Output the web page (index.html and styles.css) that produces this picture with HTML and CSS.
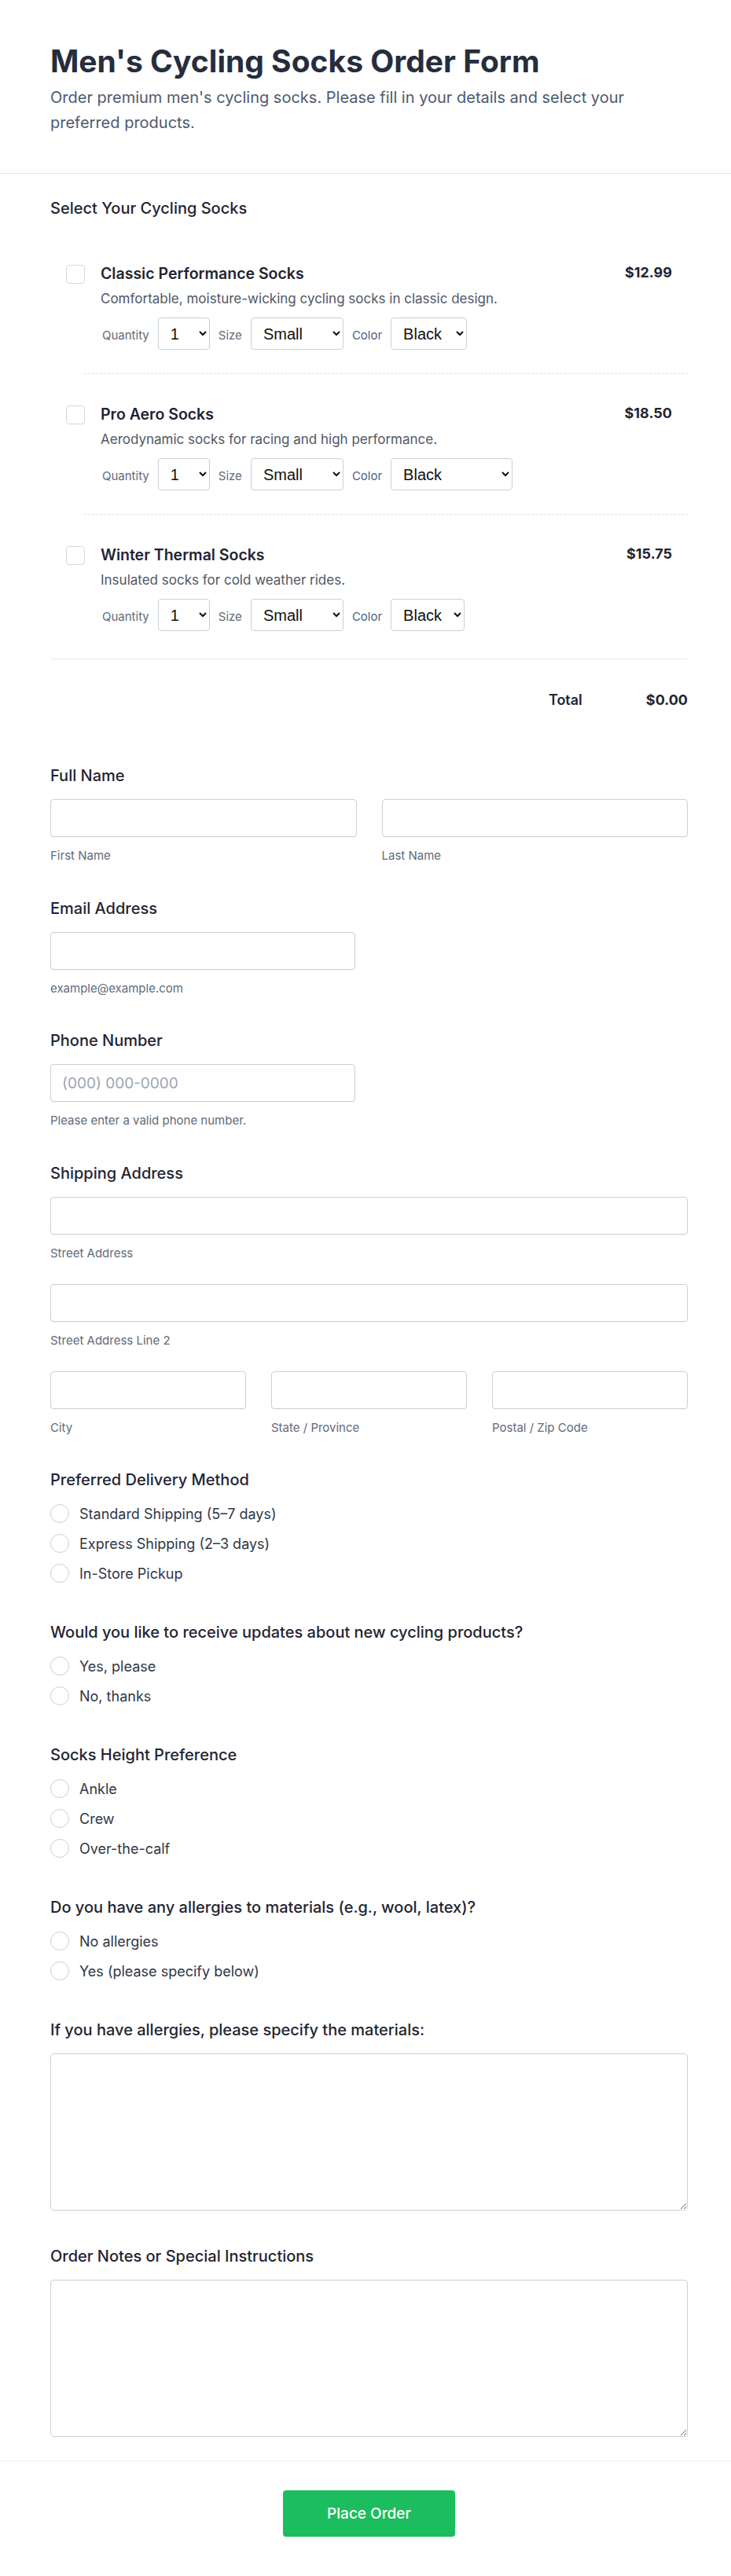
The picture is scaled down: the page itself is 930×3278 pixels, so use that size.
FILE: index.html
```html
<!DOCTYPE html>
<html lang="en">
<head>
<meta charset="utf-8">
<title>Men's Cycling Socks Order Form</title>
<link rel="stylesheet" href="styles.css">
</head>
<body>
<header class="header">
  <h1 class="title">Men's Cycling Socks Order Form</h1>
  <p class="subtitle">Order premium men's cycling socks. Please fill in your details and select your preferred products.</p>
</header>

<form class="form">
  <div class="section-label">Select Your Cycling Socks</div>

  <div class="products">
    <div class="product">
      <input type="checkbox" class="check">
      <div class="info">
        <div class="pname">Classic Performance Socks</div>
        <div class="pdesc">Comfortable, moisture-wicking cycling socks in classic design.</div>
        <div class="opts">
          <span class="opt-label">Quantity</span>
          <select class="sel sel-qty"><option>1</option><option>2</option><option>3</option></select>
          <span class="opt-label">Size</span>
          <select class="sel sel-size"><option>Small</option><option>Medium</option><option>Large</option></select>
          <span class="opt-label blue">Color</span>
          <select class="sel sel-color1"><option>Black</option><option>White</option></select>
        </div>
      </div>
      <div class="price">$12.99</div>
    </div>
    <div class="divider"></div>
    <div class="product">
      <input type="checkbox" class="check">
      <div class="info">
        <div class="pname">Pro Aero Socks</div>
        <div class="pdesc">Aerodynamic socks for racing and high performance.</div>
        <div class="opts">
          <span class="opt-label">Quantity</span>
          <select class="sel sel-qty"><option>1</option><option>2</option><option>3</option></select>
          <span class="opt-label">Size</span>
          <select class="sel sel-size"><option>Small</option><option>Medium</option><option>Large</option></select>
          <span class="opt-label blue">Color</span>
          <select class="sel sel-color2"><option>Black</option><option>Fluoro Yellow</option></select>
        </div>
      </div>
      <div class="price">$18.50</div>
    </div>
    <div class="divider"></div>
    <div class="product">
      <input type="checkbox" class="check">
      <div class="info">
        <div class="pname">Winter Thermal Socks</div>
        <div class="pdesc">Insulated socks for cold weather rides.</div>
        <div class="opts">
          <span class="opt-label">Quantity</span>
          <select class="sel sel-qty"><option>1</option><option>2</option><option>3</option></select>
          <span class="opt-label">Size</span>
          <select class="sel sel-size"><option>Small</option><option>Medium</option><option>Large</option></select>
          <span class="opt-label blue">Color</span>
          <select class="sel sel-color3"><option>Black</option><option>Grey</option></select>
        </div>
      </div>
      <div class="price">$15.75</div>
    </div>
  </div>

  <div class="total-row">
    <span class="total-label">Total</span>
    <span class="total-value">$0.00</span>
  </div>

  <div class="fields">
    <div class="field">
      <div class="label">Full Name</div>
      <div class="row2">
        <div class="col">
          <input type="text" class="input">
          <div class="sub">First Name</div>
        </div>
        <div class="col">
          <input type="text" class="input">
          <div class="sub blue">Last Name</div>
        </div>
      </div>
    </div>

    <div class="field">
      <div class="label">Email Address</div>
      <input type="email" class="input half">
      <div class="sub">example@example.com</div>
    </div>

    <div class="field">
      <div class="label">Phone Number</div>
      <input type="tel" class="input half" placeholder="(000) 000-0000">
      <div class="sub">Please enter a valid phone number.</div>
    </div>

    <div class="field">
      <div class="label">Shipping Address</div>
      <input type="text" class="input">
      <div class="sub">Street Address</div>
      <input type="text" class="input gap-top">
      <div class="sub">Street Address Line 2</div>
      <div class="row3 gap-top">
        <div class="col">
          <input type="text" class="input">
          <div class="sub blue">City</div>
        </div>
        <div class="col">
          <input type="text" class="input">
          <div class="sub blue">State / Province</div>
        </div>
        <div class="col">
          <input type="text" class="input">
          <div class="sub blue">Postal / Zip Code</div>
        </div>
      </div>
    </div>

    <div class="field radio-field">
      <div class="label">Preferred Delivery Method</div>
      <div class="radios">
        <label class="radio-row"><input type="radio" name="delivery" class="radio"><span>Standard Shipping (5–7 days)</span></label>
        <label class="radio-row"><input type="radio" name="delivery" class="radio"><span>Express Shipping (2–3 days)</span></label>
        <label class="radio-row"><input type="radio" name="delivery" class="radio"><span>In-Store Pickup</span></label>
      </div>
    </div>

    <div class="field radio-field">
      <div class="label">Would you like to receive updates about new cycling products?</div>
      <div class="radios">
        <label class="radio-row"><input type="radio" name="updates" class="radio"><span>Yes, please</span></label>
        <label class="radio-row"><input type="radio" name="updates" class="radio"><span>No, thanks</span></label>
      </div>
    </div>

    <div class="field radio-field">
      <div class="label">Socks Height Preference</div>
      <div class="radios">
        <label class="radio-row"><input type="radio" name="height" class="radio"><span>Ankle</span></label>
        <label class="radio-row"><input type="radio" name="height" class="radio"><span>Crew</span></label>
        <label class="radio-row"><input type="radio" name="height" class="radio"><span>Over-the-calf</span></label>
      </div>
    </div>

    <div class="field radio-field">
      <div class="label">Do you have any allergies to materials (e.g., wool, latex)?</div>
      <div class="radios">
        <label class="radio-row"><input type="radio" name="allergy" class="radio"><span>No allergies</span></label>
        <label class="radio-row"><input type="radio" name="allergy" class="radio"><span>Yes (please specify below)</span></label>
      </div>
    </div>

    <div class="field text-field">
      <div class="label">If you have allergies, please specify the materials:</div>
      <textarea class="textarea"></textarea>
    </div>

    <div class="field text-field last">
      <div class="label">Order Notes or Special Instructions</div>
      <textarea class="textarea"></textarea>
    </div>
  </div>
</form>

<footer class="footer">
  <button type="button" class="submit">Place Order</button>
</footer>
</body>
</html>
```

FILE: styles.css
```css
* { box-sizing: border-box; }

body {
  margin: 0;
  background: #ffffff;
  font-family: Inter, "Noto Sans", "Liberation Sans", sans-serif;
  color: #1e293b;
}

.header {
  padding: 56px 55px 48px 64px;
  border-bottom: 1px solid #e2e6ec;
}

.title {
  margin: 0;
  font-size: 39px;
  line-height: 44px;
  font-weight: 700;
  color: #262d3d;
}

.subtitle {
  margin: 8px 0 0;
  max-width: 760px;
  font-size: 20px;
  line-height: 32px;
  color: #4d5a70;
}

.form {
  padding: 31px 55px 30px 64px;
}

.section-label,
.label {
  font-size: 20px;
  line-height: 27px;
  font-weight: 500;
  color: #1f2433;
}

.products {
  margin-top: 18px;
  padding-bottom: 5px;
  border-bottom: 1px solid #e3e7ed;
}

.product {
  display: flex;
  align-items: flex-start;
  gap: 20px;
  padding: 38px 20px 30px;
}

.divider {
  margin-left: 43px;
  border-top: 1px dashed #dde1e7;
}

.check {
  appearance: none;
  -webkit-appearance: none;
  flex: none;
  width: 24px;
  height: 24px;
  margin: 2px 0 0;
  border: 1px solid #d3d8df;
  border-radius: 4px;
  background: #fff;
}

.info {
  flex: 1;
}

.pname {
  font-size: 19.5px;
  line-height: 27px;
  font-weight: 600;
  color: #1f2433;
}

.pdesc {
  margin-top: 6px;
  font-size: 17px;
  line-height: 24px;
  color: #4f5766;
}

.opts {
  margin-top: 12px;
  display: flex;
  align-items: baseline;
  gap: 11px;
  padding-left: 2px;
}

.opt-label {
  font-size: 15px;
  color: #5f6b7a;
}

.blue {
  color: #4d6182;
}

.sel {
  height: 41px;
  padding: 0 8px 0 11px;
  font-family: "Liberation Sans", Arial, sans-serif;
  font-size: 20px;
  color: #111111;
  background: #ffffff;
  border: 1px solid #c9d0da;
  border-radius: 4px;
}

.sel-qty { width: 66px; }
.sel-size { width: 118px; }
.sel-color1 { width: 97px; }
.sel-color2 { width: 155px; }
.sel-color3 { width: 94px; }

.price {
  margin-left: auto;
  font-size: 18px;
  line-height: 24px;
  font-weight: 700;
  color: #1f2433;
}

.total-row {
  display: flex;
  justify-content: flex-end;
  align-items: baseline;
  gap: 81px;
  padding-top: 38px;
  font-size: 18px;
  line-height: 27px;
  color: #1f2433;
}

.total-label { font-weight: 600; }
.total-value { font-weight: 700; }

.fields {
  margin-top: 70px;
}

.field {
  margin-bottom: 43.5px;
}

.field .label {
  margin-bottom: 16px;
}

.radio-field {
  margin-bottom: 49px;
}

.text-field {
  margin-bottom: 45px;
}

.text-field.last {
  margin-bottom: 0;
}

.input {
  display: block;
  width: 100%;
  height: 48px;
  padding: 0 14px;
  font-family: Inter, "Noto Sans", sans-serif;
  font-size: 19px;
  color: #1f2433;
  background: #fff;
  border: 1px solid #c9d0da;
  border-radius: 4px;
  box-shadow: 0 1px 0 rgba(15, 23, 42, 0.04);
}

.input::placeholder {
  color: #9aa5b5;
}

.half {
  width: calc(50% - 18px);
}

.gap-top {
  margin-top: 29px;
}

.sub {
  margin-top: 14px;
  font-size: 15px;
  line-height: 20px;
  color: #5f6b7a;
}

.row2 {
  display: grid;
  grid-template-columns: 1fr 1fr;
  gap: 32px;
}

.row3 {
  display: grid;
  grid-template-columns: 1fr 1fr 1fr;
  gap: 32px;
}

.radios {
  display: flex;
  flex-direction: column;
  gap: 12px;
}

.radio-row {
  display: flex;
  align-items: center;
  gap: 13px;
  height: 26px;
  font-size: 18px;
  color: #2f3747;
}

.radio {
  appearance: none;
  -webkit-appearance: none;
  flex: none;
  width: 24px;
  height: 24px;
  margin: 0;
  border: 1px solid #c9d0da;
  border-radius: 50%;
  background: #fff;
}

.textarea {
  display: block;
  width: 100%;
  height: 200px;
  padding: 12px 14px;
  font-family: Inter, "Noto Sans", sans-serif;
  font-size: 17px;
  border: 1px solid #c9d0da;
  border-radius: 4px;
  background: #fff;
  resize: vertical;
}

.footer {
  padding: 37px 55px 50px 64px;
  border-top: 1px solid #eceef2;
  text-align: center;
}

.submit {
  padding: 16px 56px;
  font-family: Inter, "Noto Sans", sans-serif;
  font-size: 19px;
  line-height: 27px;
  font-weight: 500;
  color: #ffffff;
  background: #1cbd5e;
  border: none;
  border-radius: 4px;
}
```
